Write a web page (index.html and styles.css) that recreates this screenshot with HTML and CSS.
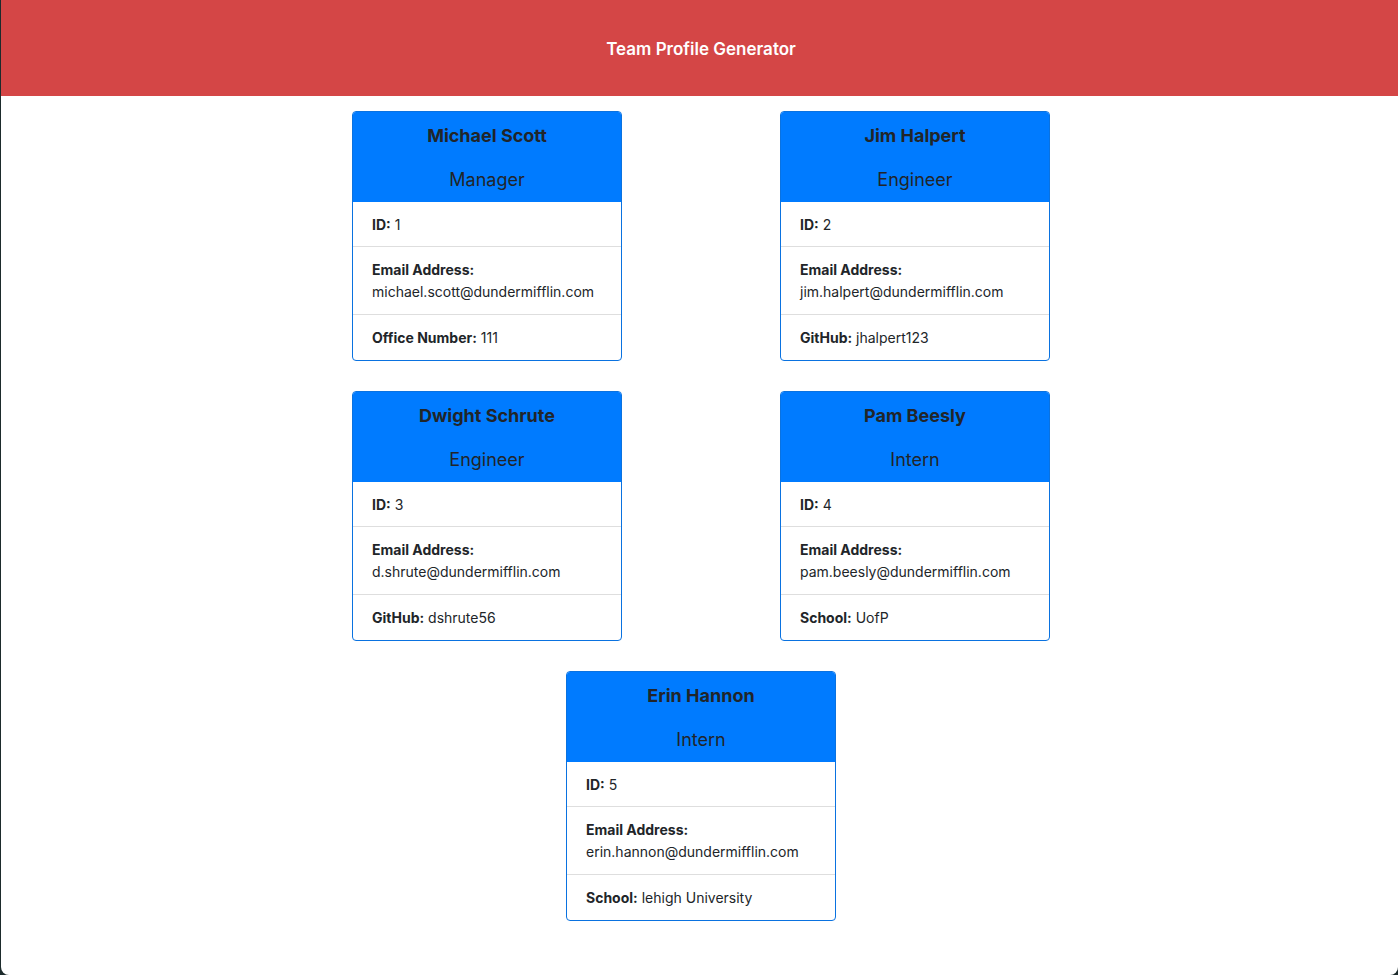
FILE: index.html
```html
<!DOCTYPE html>
<html lang="en">
<head>
<meta charset="utf-8">
<title>Team Profile Generator</title>
<link rel="stylesheet" href="styles.css">
</head>
<body>
<div class="page">
  <header class="banner">
    <h1 class="banner-title">Team Profile Generator</h1>
  </header>
  <div class="content">
  <main class="team">
    <div class="slot">
      <section class="card">
        <div class="card-header">
          <h2 class="name">Michael Scott</h2>
          <h3 class="role">Manager</h3>
        </div>
        <ul class="details">
          <li><b>ID:</b> 1</li>
          <li><b>Email Address:</b><br>michael.scott@dundermifflin.com</li>
          <li><b>Office Number:</b> 111</li>
        </ul>
      </section>
    </div>
    <div class="slot">
      <section class="card">
        <div class="card-header">
          <h2 class="name">Jim Halpert</h2>
          <h3 class="role">Engineer</h3>
        </div>
        <ul class="details">
          <li><b>ID:</b> 2</li>
          <li><b>Email Address:</b><br>jim.halpert@dundermifflin.com</li>
          <li><b>GitHub:</b> jhalpert123</li>
        </ul>
      </section>
    </div>
    <div class="slot">
      <section class="card">
        <div class="card-header">
          <h2 class="name">Dwight Schrute</h2>
          <h3 class="role">Engineer</h3>
        </div>
        <ul class="details">
          <li><b>ID:</b> 3</li>
          <li><b>Email Address:</b><br>d.shrute@dundermifflin.com</li>
          <li><b>GitHub:</b> dshrute56</li>
        </ul>
      </section>
    </div>
    <div class="slot">
      <section class="card">
        <div class="card-header">
          <h2 class="name">Pam Beesly</h2>
          <h3 class="role">Intern</h3>
        </div>
        <ul class="details">
          <li><b>ID:</b> 4</li>
          <li><b>Email Address:</b><br>pam.beesly@dundermifflin.com</li>
          <li><b>School:</b> UofP</li>
        </ul>
      </section>
    </div>
    <div class="slot">
      <section class="card">
        <div class="card-header">
          <h2 class="name">Erin Hannon</h2>
          <h3 class="role">Intern</h3>
        </div>
        <ul class="details">
          <li><b>ID:</b> 5</li>
          <li><b>Email Address:</b><br>erin.hannon@dundermifflin.com</li>
          <li><b>School:</b> lehigh University</li>
        </ul>
      </section>
    </div>
  </main>
  </div>
</div>
</body>
</html>
```
FILE: styles.css
```css
* { box-sizing: border-box; }

html {
  background: #1d2b2c;
  height: 100%;
}

body {
  margin: 0;
  height: 100%;
  font-family: Inter, "Liberation Sans", sans-serif;
  color: #212529;
}

.page {
  margin-left: 1px;
  min-height: 975px;
  background: #ffffff;
  border-radius: 0 0 8px 8px;
  overflow: hidden;
}

.banner {
  background: #d44646;
  height: 96px;
  display: flex;
  align-items: center;
  justify-content: center;
  padding: 2px 0 0 3px;
}

.banner-title {
  margin: 0;
  color: #ffffff;
  font-size: 17px;
  font-weight: 600;
  line-height: 22px;
}

.content {
  padding-left: 3px;
}

.team {
  width: 856px;
  margin: 15px auto 0;
  display: flex;
  flex-wrap: wrap;
  justify-content: center;
  row-gap: 30px;
}

.slot {
  width: 428px;
  display: flex;
  justify-content: center;
}

.card {
  width: 270px;
  border: 1px solid #0a72e0;
  border-radius: 4px;
  overflow: hidden;
  background: #ffffff;
}

.card-header {
  background: #007bff;
  text-align: center;
  padding: 13px 20px 11px;
}

.name {
  margin: 0 0 22px;
  font-size: 18px;
  font-weight: 700;
  line-height: 22px;
}

.role {
  margin: 0;
  font-size: 18px;
  font-weight: 400;
  line-height: 22px;
}

.details {
  list-style: none;
  margin: 0;
  padding: 0;
}

.details li {
  padding: 12px 19px 10px;
  font-size: 14px;
  line-height: 22px;
  border-top: 1px solid #dedede;
}

.details li:first-child {
  border-top: none;
}

.details li + li {
  padding-bottom: 11px;
}

.details b {
  font-weight: 700;
}
```
